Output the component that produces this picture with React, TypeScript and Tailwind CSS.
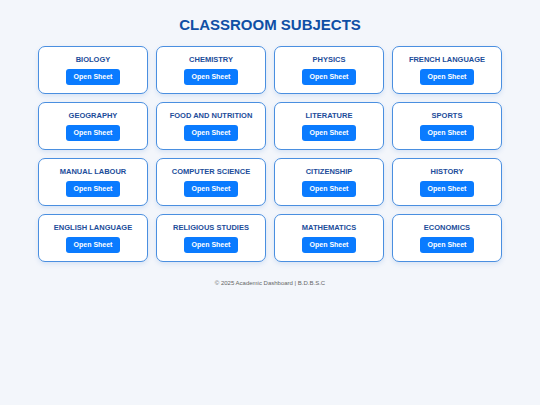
const subjects = [
  "BIOLOGY",
  "CHEMISTRY",
  "PHYSICS",
  "FRENCH LANGUAGE",
  "GEOGRAPHY",
  "FOOD AND NUTRITION",
  "LITERATURE",
  "SPORTS",
  "MANUAL LABOUR",
  "COMPUTER SCIENCE",
  "CITIZENSHIP",
  "HISTORY",
  "ENGLISH LANGUAGE",
  "RELIGIOUS STUDIES",
  "MATHEMATICS",
  "ECONOMICS",
];

function SubjectCard({ name }: { name: string }) {
  return (
    <div className="flex flex-col items-center rounded-[7px] border-[1.5px] border-[#4a8fe0] bg-white pt-[8px] pb-[8px] shadow-[0_2px_5px_rgba(0,90,200,0.12)]">
      <div className="text-[7.5px] font-bold leading-[9px] text-[#1c4d9a]">{name}</div>
      <button className="mt-[5px] h-[16px] rounded-[3px] bg-[#0a7bff] px-[8px] text-[7px] font-bold text-white">
        Open Sheet
      </button>
    </div>
  );
}

export default function App() {
  return (
    <div
      className="min-h-[405px] bg-[#f3f6fb] pt-[15px]"
      style={{ fontFamily: '"Liberation Sans", Arial, sans-serif' }}
    >
      <h1 className="text-center text-[15px] font-bold leading-[20px] text-[#0f4fa5]">
        CLASSROOM SUBJECTS
      </h1>
      <div className="mx-auto mt-[11px] grid w-[464px] grid-cols-4 gap-[8px]">
        {subjects.map((s) => (
          <SubjectCard key={s} name={s} />
        ))}
      </div>
      <p className="mt-[16.5px] text-center text-[6px] leading-[8px] text-[#666]">
        © 2025 Academic Dashboard | B.D.B.S.C
      </p>
    </div>
  );
}
